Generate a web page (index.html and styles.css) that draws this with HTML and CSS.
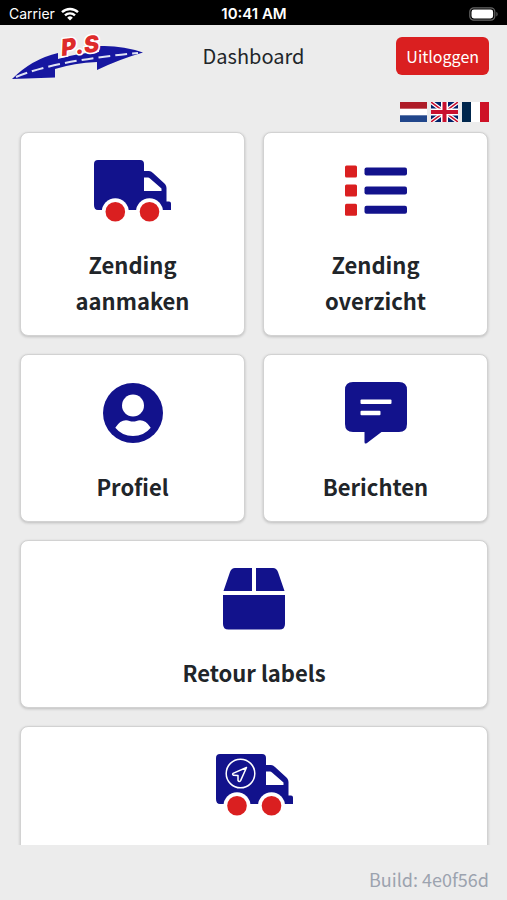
FILE: index.html
```
<!DOCTYPE html>
<html lang="nl">
<head>
  <meta charset="UTF-8">
  <meta name="viewport" content="width=device-width, initial-scale=1.0">
  <title>Dashboard</title>
  <link rel="stylesheet" href="styles.css">
</head>
<body>
  <div class="statusbar">
    <div class="carrier">
      <span>Carrier</span>
      <svg width="18" height="14" viewBox="0 0 18 14" fill="none" stroke="#fff" stroke-width="2.4">
        <path d="M1 5.2a11.6 11.6 0 0 1 16 0"/>
        <path d="M4 8.4a7.2 7.2 0 0 1 10 0"/>
        <path d="M9 13.6 6.2 10.7a4 4 0 0 1 5.6 0z" fill="#fff" stroke="none"/>
      </svg>
    </div>
    <span class="time">10:41 AM</span>
    <svg class="battery" width="30" height="14" viewBox="0 0 30 14">
      <rect x=".8" y=".8" width="25" height="12.4" rx="4" fill="none" stroke="#666" stroke-width="1.2"/>
      <rect x="2.5" y="2.5" width="21.6" height="9" rx="2.4" fill="#fff"/>
      <path d="M27.4 5v4.4c1.6-.6 1.6-3.8 0-4.4z" fill="#666"/>
    </svg>
  </div>

  <header class="header">
    <svg class="logo" width="132" height="50" viewBox="0 0 132 50" role="img" aria-label="P.S">
      <path d="M0 48Q20 28 46 22V28Q66 22 87 21V15Q110 14 131 21.500Q108 28 85 39V31Q62 32 43 38V46.500Z" fill="#1616a0"/>
      <path d="M4 46Q23 38 53 32T126 22" fill="none" stroke="#dfe2f4" stroke-width="2" stroke-dasharray="12 5"/>
      <text class="logo-text" x="50" y="25" transform="rotate(-7 50 25)">P.S</text>
    </svg>
    <h1 class="title">Dashboard</h1>
    <button type="button" class="logout">Uitloggen</button>
  </header>

  <nav class="languages">
    <button type="button" class="flag" aria-label="Nederlands">
      <svg viewBox="0 0 27 20">
        <path fill="#fff" d="M0 0h27v20H0z"/>
        <path fill="#ae1c28" d="M0 0h27v6.7H0z"/>
        <path fill="#21468b" d="M0 13.3h27V20H0z"/>
      </svg>
    </button>
    <button type="button" class="flag" aria-label="English">
      <svg viewBox="0 0 27 20">
        <path fill="#012169" d="M0 0h27v20H0z"/>
        <path stroke="#fff" stroke-width="4" d="M0 0l27 20M27 0L0 20"/>
        <path stroke="#c8102e" stroke-width="1.5" d="M0 0l27 20M27 0L0 20"/>
        <path stroke="#fff" stroke-width="7" d="M13.5 0v20M0 10h27"/>
        <path stroke="#c8102e" stroke-width="4" d="M13.5 0v20M0 10h27"/>
      </svg>
    </button>
    <button type="button" class="flag" aria-label="Français">
      <svg viewBox="0 0 27 20">
        <path fill="#fff" d="M0 0h27v20H0z"/>
        <path fill="#00264d" d="M0 0h9v20H0z"/>
        <path fill="#ce1126" d="M18 0h9v20h-9z"/>
      </svg>
    </button>
  </nav>

  <main class="tiles">
    <a href="#" class="tile">
      <svg class="icon icon-truck" viewBox="0 0 77 62">
        <path class="blue" fill-rule="evenodd" d="M4 0H46Q50 0 50 4V11H55Q57 11 59 13L71 24Q72.5 26 72.5 28V41.5H75Q77 41.5 77 43.5V50H4Q0 50 0 45V4Q0 0 4 0ZM50 17.5V31H67.5V28.5L56 18.5Q55 17.5 54 17.5Z"/>
        <circle class="white" cx="21.3" cy="51.8" r="13.5"/>
        <circle class="white" cx="55.5" cy="51.8" r="13.5"/>
        <circle class="red" cx="21.3" cy="51.8" r="9.8"/>
        <circle class="red" cx="55.5" cy="51.8" r="9.8"/>
      </svg>
      <span>Zending aanmaken</span>
    </a>

    <a href="#" class="tile">
      <svg class="icon" viewBox="0 0 62 62">
        <g class="red">
          <rect y="5.5" width="12" height="12" rx="1.5"/>
          <rect y="24.6" width="12" height="12" rx="1.5"/>
          <rect y="43.7" width="12" height="12" rx="1.5"/>
        </g>
        <g class="blue">
          <rect x="19.5" y="7.5" width="42.5" height="8" rx="2"/>
          <rect x="19.5" y="26.6" width="42.5" height="8" rx="2"/>
          <rect x="19.5" y="45.7" width="42.5" height="8" rx="2"/>
        </g>
      </svg>
      <span>Zending overzicht</span>
    </a>

    <a href="#" class="tile">
      <svg class="icon" viewBox="0 0 62 62">
        <circle class="blue" cx="31" cy="31" r="30"/>
        <circle class="white" cx="31" cy="23.5" r="11"/>
        <path class="white" d="M13.3 45.7Q18 38.3 24 38.3Q26 38.3 27.5 38.9Q31 39.9 34.5 38.9Q36 38.3 38 38.3Q44 38.3 48.7 45.7Q42 54 31 54Q20 54 13.3 45.7Z"/>
      </svg>
      <span>Profiel</span>
    </a>

    <a href="#" class="tile">
      <svg class="icon" viewBox="0 0 62 62">
        <path class="blue" d="M8 0H54Q62 0 62 8V42Q62 50 54 50H36.5L22 61Q19.5 62.5 19.5 60V50H8Q0 50 0 42V8Q0 0 8 0Z"/>
        <rect class="white" x="15.5" y="17.5" width="31" height="4.4" rx="1"/>
        <rect class="white" x="15.5" y="28.8" width="20" height="4.4" rx="1"/>
      </svg>
      <span>Berichten</span>
    </a>

    <a href="#" class="tile tile-wide">
      <svg class="icon" viewBox="0 0 62 62">
        <path class="blue" d="M12 0H29V23H.5L7 4Q8.5 0 12 0ZM33 0H50Q53.5 0 55 4L61.5 23H33ZM0 27H62V56Q62 61.5 56.5 61.5H5.5Q0 61.5 0 56Z"/>
      </svg>
      <span>Retour labels</span>
    </a>

    <a href="#" class="tile tile-wide">
      <svg class="icon icon-truck" viewBox="0 0 77 62">
        <path class="blue" fill-rule="evenodd" d="M4 0H46Q50 0 50 4V11H55Q57 11 59 13L71 24Q72.5 26 72.5 28V41.5H75Q77 41.5 77 43.5V50H4Q0 50 0 45V4Q0 0 4 0ZM50 17.5V31H67.5V28.5L56 18.5Q55 17.5 54 17.5Z"/>
        <circle class="white" cx="21" cy="51.8" r="13.5"/>
        <circle class="white" cx="55.5" cy="51.8" r="13.5"/>
        <circle class="red" cx="21" cy="51.8" r="9.8"/>
        <circle class="red" cx="55.5" cy="51.8" r="9.8"/>
        <circle class="line" cx="24.5" cy="19.5" r="14.3"/>
        <path class="line" d="M30.5 13.5L17 19.4Q16 20.5 17.5 21.3L22 21.6V26.5Q23.3 28.5 24.6 26.6Z"/>
      </svg>
    </a>
  </main>

  <footer class="footer">Build: 4e0f56d</footer>
</body>
</html>
```
FILE: styles.css
```
:root {
  --blue: #12128c;
  --red: #da1f20;
  --dark: #212529;
  --muted: #9ca3af;
  --background: #ececec;
}

* {
  margin: 0;
  padding: 0;
  box-sizing: border-box;
}

body {
  font-family: "Noto Sans CJK JP", "Noto Sans", sans-serif;
  background: var(--background);
  color: var(--dark);
  height: 100vh;
  display: flex;
  flex-direction: column;
}

button {
  border: none;
  cursor: pointer;
  font-family: inherit;
}

svg {
  display: block;
}

.statusbar {
  display: grid;
  grid-template-columns: 1fr auto 1fr;
  align-items: center;
  height: 25px;
  padding: 2px 8px 0 9px;
  background: #000;
  color: #fff;
  font-family: Inter, sans-serif;
  font-size: 14px;
}

.carrier {
  display: flex;
  align-items: center;
  gap: 6px;
}

.time {
  font-size: 15px;
  font-weight: 600;
}

.battery {
  justify-self: end;
}

.header {
  display: grid;
  grid-template-columns: 1fr auto 1fr;
  align-items: center;
  padding: 6px 18px;
}

.logo {
  margin-left: -6px;
  overflow: visible;
}

.logo-text {
  font-family: Inter, sans-serif;
  font-size: 23px;
  font-weight: 900;
  font-style: italic;
  fill: #de2b2b;
  stroke: #fff;
  stroke-width: 3px;
  paint-order: stroke;
}

.title {
  font-size: 20px;
  font-weight: 400;
  line-height: 32px;
}

.logout {
  justify-self: end;
  padding: 0 10px;
  height: 38px;
  border-radius: 6px;
  background: var(--red);
  color: #fff;
  font-size: 16px;
}

.languages {
  display: flex;
  justify-content: flex-end;
  gap: 4px;
  padding: 15px 18px 0;
}

.flag {
  width: 27px;
  height: 20px;
  background: none;
}

.tiles {
  flex: 1;
  min-height: 0;
  display: grid;
  grid-template-columns: 1fr 1fr;
  grid-auto-rows: max-content;
  gap: 18px;
  margin-top: 4px;
  padding: 6px 19px 0 20px;
  overflow-y: auto;
  scrollbar-width: none;
}

.tile {
  display: flex;
  flex-direction: column;
  align-items: center;
  gap: 24px;
  min-height: 168px;
  padding: 27px 48px 17px;
  background: #fff;
  border: 1px solid #d2d2d2;
  border-radius: 8px;
  box-shadow: 0 1px 3px rgba(0, 0, 0, 0.2);
  color: var(--dark);
  font-size: 22px;
  font-weight: 700;
  line-height: 36px;
  text-align: center;
  text-decoration: none;
}

.tile-wide {
  grid-column: span 2;
}

.icon {
  width: 62px;
  height: 62px;
  flex-shrink: 0;
}

.icon-truck {
  width: 77px;
}

.blue {
  fill: var(--blue);
}

.red {
  fill: var(--red);
}

.white {
  fill: #fff;
}

.line {
  fill: none;
  stroke: #fff;
  stroke-width: 1.5px;
  stroke-linejoin: round;
}

.footer {
  padding: 18px 18px 5px;
  color: var(--muted);
  font-size: 18px;
  line-height: 32px;
  text-align: right;
}
```
